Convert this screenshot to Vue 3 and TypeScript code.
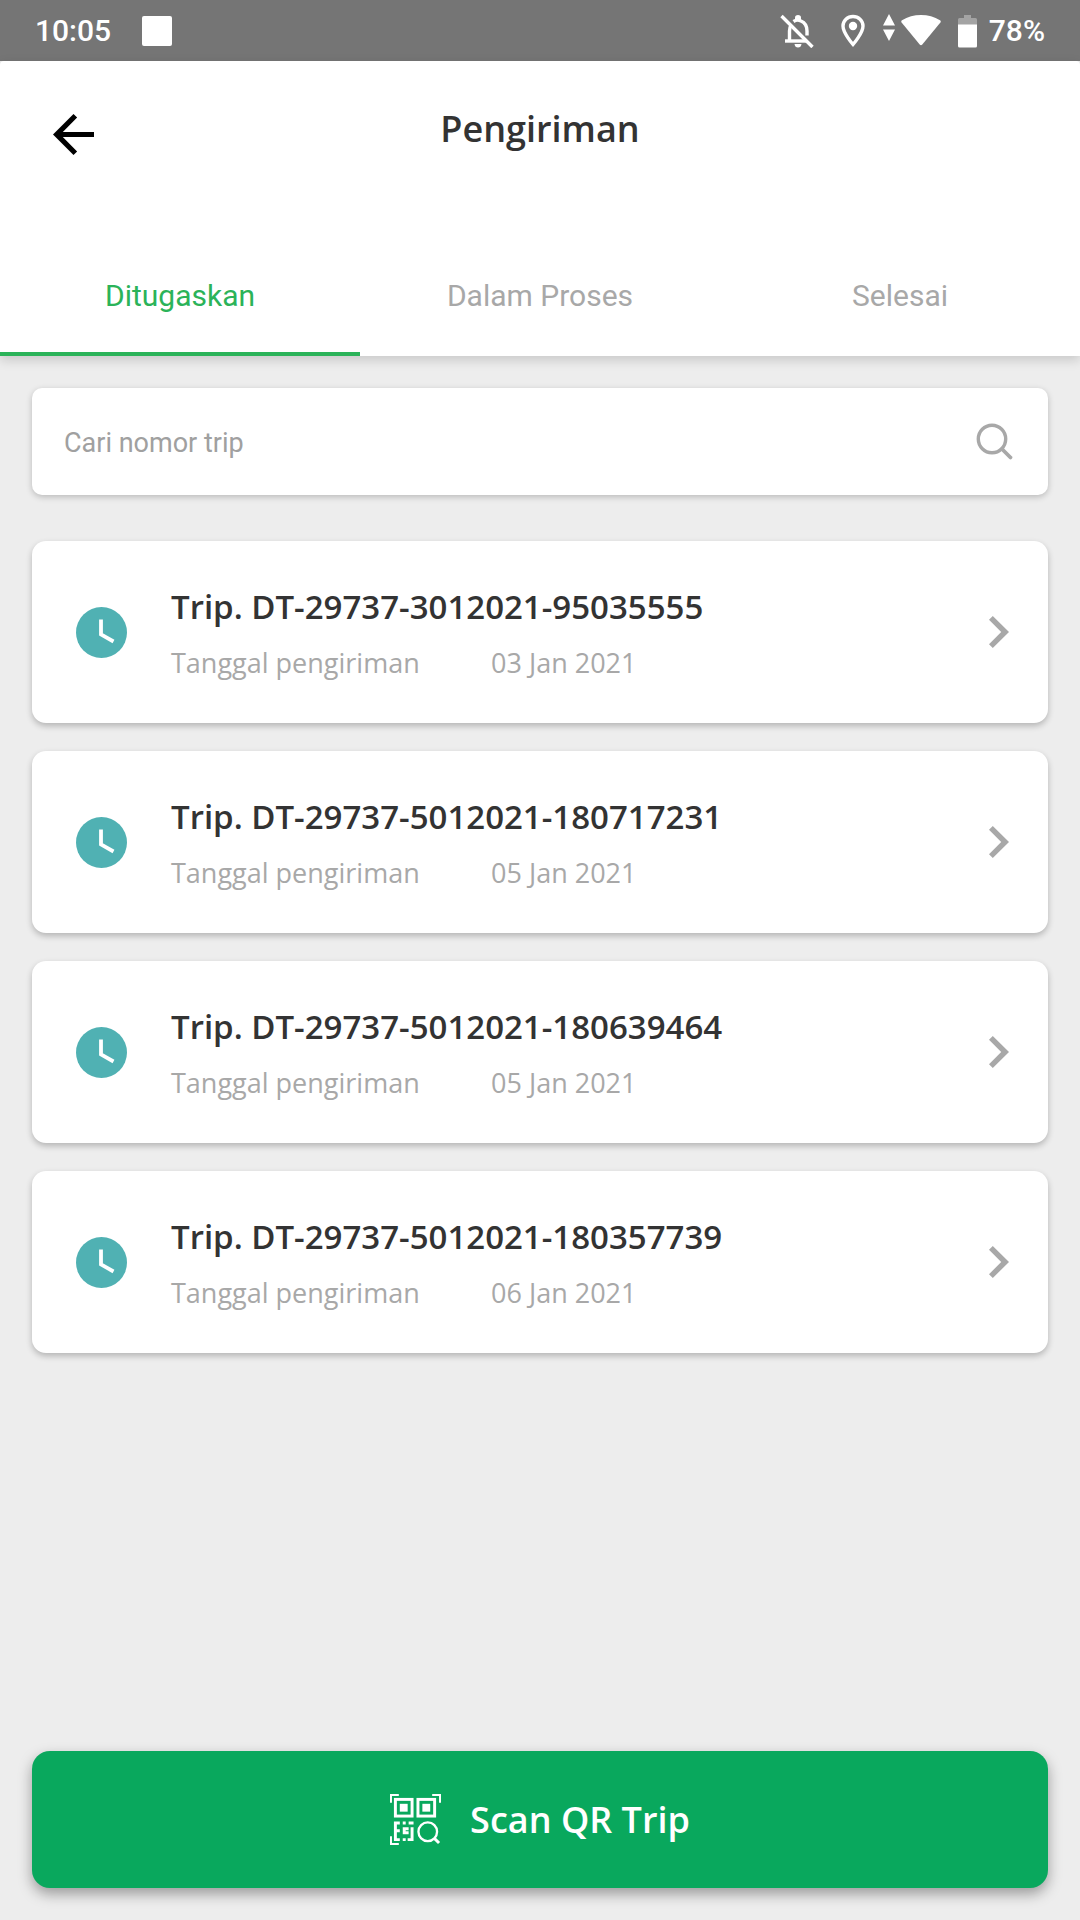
<script setup lang="ts">
import { ref } from 'vue'

interface Trip {
  code: string
  date: string
}

const tabs: string[] = ['Ditugaskan', 'Dalam Proses', 'Selesai']
const activeTab = ref(0)
const query = ref('')

const trips: Trip[] = [
  { code: 'DT-29737-3012021-95035555', date: '03 Jan 2021' },
  { code: 'DT-29737-5012021-180717231', date: '05 Jan 2021' },
  { code: 'DT-29737-5012021-180639464', date: '05 Jan 2021' },
  { code: 'DT-29737-5012021-180357739', date: '06 Jan 2021' },
]
</script>

<template>
  <div class="screen">
    <div class="status">
      <span class="status-text">10:05</span>
      <span class="status-square"></span>
      <div class="status-icons">
        <svg class="bell" width="34" height="34" viewBox="0 0 34 34" fill="none" stroke="#fff" stroke-width="3.400">
          <path d="M1.500 2L32.500 33" />
          <path d="M5 27H26" />
          <path d="M9.500 27V17Q9.500 13.500 11 11" />
          <path d="M13.500 7.500Q17 5 21 7Q27 9.500 27 17V21.500" />
          <path d="M15 6V3.500Q15 1 18 1Q21 1 21 3.500V6Z" fill="#fff" stroke="none" />
          <path d="M14.500 30H21.500Q21 33.500 18 33.500Q15 33.500 14.500 30Z" fill="#fff" stroke="none" />
        </svg>
        <svg class="pin" width="24" height="34" viewBox="0 0 24 34">
          <path d="M12 2.500C6.500 2.500 2 6.500 2 12C2 19 12 30.500 12 30.500S22 19 22 12C22 6.500 17.500 2.500 12 2.500Z" fill="none" stroke="#fff" stroke-width="3.400" />
          <circle cx="12" cy="12" r="4.200" fill="#fff" />
        </svg>
        <svg class="data" width="12" height="34" viewBox="0 0 12 34" fill="#fff">
          <path d="M6 0L12 11.500H0ZM0 15.500H12L6 27Z" />
        </svg>
        <svg class="wifi" width="40" height="34" viewBox="0 0 40 34" fill="#fff">
          <path d="M.6 8.500Q-.3 7.200 1 6.300Q9.500 1 20 1T39 6.300Q40.300 7.200 39.400 8.500L21.300 30.500Q20 32 18.700 30.500Z" />
        </svg>
        <svg class="battery" width="19" height="34" viewBox="0 0 19 34">
          <path d="M6 1H13V4H17.500Q19 4 19 5.500V12H0V5.500Q0 4 1.500 4H6Z" fill="#a3a3a3" />
          <path d="M0 10.500H19V32Q19 33.500 17.500 33.500H1.500Q0 33.500 0 32Z" fill="#fff" />
        </svg>
        <span class="status-text">78%</span>
      </div>
    </div>

    <header class="header">
      <div class="title-row">
        <button class="back" type="button" aria-label="Kembali">
          <svg width="41" height="41" viewBox="4 4 16 16">
            <path d="M20 11H7.830l5.590-5.590L12 4l-8 8 8 8 1.410-1.410L7.830 13H20v-2z" />
          </svg>
        </button>
        <h1 class="title">Pengiriman</h1>
      </div>
      <nav class="tabs">
        <button
          v-for="(tab, i) in tabs"
          :key="tab"
          type="button"
          class="tab"
          :class="{ active: i === activeTab }"
          @click="activeTab = i"
        >
          {{ tab }}
        </button>
      </nav>
    </header>

    <main class="content">
      <label class="search">
        <input v-model="query" type="text" placeholder="Cari nomor trip" aria-label="Cari nomor trip" />
        <svg width="38" height="38" viewBox="0 0 38 38" fill="none" stroke="#a8a8a8" stroke-linecap="round">
          <circle cx="16" cy="16" r="13.700" stroke-width="3.400" />
          <path d="M26 26L34.500 34.500" stroke-width="3.800" />
        </svg>
      </label>

      <ul class="trips">
        <li v-for="trip in trips" :key="trip.code">
          <button class="trip" type="button">
            <svg class="clock" width="51" height="51" viewBox="0 0 51 51">
              <circle cx="25.500" cy="25.500" r="25.500" fill="#50b1b3" />
              <path d="M25 12.500V27.500L37.500 34.500" fill="none" stroke="#fff" stroke-width="3.800" />
            </svg>
            <span class="trip-text">
              <span class="trip-code">Trip. {{ trip.code }}</span>
              <span class="trip-meta">
                <span class="trip-label">Tanggal pengiriman</span>
                <span>{{ trip.date }}</span>
              </span>
            </span>
            <svg class="chevron" width="20" height="34" viewBox="0 0 20 34">
              <path d="M3.800 1L20 17L3.800 33L0 29.200L12.200 17L0 4.800Z" fill="#a8a8a8" />
            </svg>
          </button>
        </li>
      </ul>

      <button class="scan" type="button">
        <svg width="51" height="51" viewBox="0 0 52 52" fill="none" stroke="#fff">
          <g stroke-width="2">
            <path d="M1 9V1H9M43 1H51V9M1 43V51H9" />
          </g>
          <g stroke-width="3">
            <rect x="5.500" y="5.500" width="17" height="17" />
            <rect x="28.500" y="5.500" width="17" height="17" />
            <circle cx="38.500" cy="38.500" r="9.500" stroke-width="2.400" />
            <path d="M45 45L50 50" />
          </g>
          <g fill="#fff" stroke="none">
            <rect x="10" y="10" width="8" height="8" />
            <rect x="33" y="10" width="8" height="8" />
            <path d="M4 28H10V31H7V36H10V39H7V45H10V48H4ZM13 28H16V31H13ZM19 28H24V31H19ZM13 34H19V37H16V38H19V41H13ZM21 34H24V48H18V45H21ZM13 45H16V48H13Z" />
          </g>
        </svg>
        <span>Scan QR Trip</span>
      </button>
    </main>
  </div>
</template>

<style>
body {
  margin: 0;
  background: #ededed;
}
</style>

<style scoped>
.screen {
  display: flex;
  flex-direction: column;
  min-height: 100vh;
  background: #ededed;
  font-family: 'Open Sans', 'Noto Sans', sans-serif;
  color: #333;
}

button {
  margin: 0;
  padding: 0;
  border: 0;
  background: none;
  font: inherit;
  color: inherit;
  cursor: pointer;
}

svg {
  display: block;
  flex: none;
}

.status {
  display: flex;
  align-items: center;
  box-sizing: border-box;
  height: 61px;
  padding: 0 35px;
  background: #757575;
}

.status-text {
  font: 500 30px/36px Roboto, sans-serif;
  color: #fff;
}

.status-square {
  width: 30px;
  height: 30px;
  margin-left: 31px;
  border-radius: 2px;
  background: #fff;
}

.status-icons {
  display: flex;
  align-items: center;
  margin-left: auto;
}

.pin {
  margin-left: 27px;
}

.data {
  margin-left: 18px;
}

.wifi {
  margin-left: 6px;
}

.battery {
  margin: 0 12px 0 17px;
}

.header {
  position: relative;
  background: #fff;
  border-radius: 4px 4px 0 0;
  box-shadow: 0 4px 12px rgba(0, 0, 0, 0.16);
}

.title-row {
  display: grid;
  grid-template-columns: 42px 1fr 42px;
  align-items: center;
  height: 136px;
  padding: 0 53px;
}

.back {
  margin-top: 10px;
}

.title {
  margin: 0;
  font-size: 36px;
  line-height: 48px;
  font-weight: 600;
  text-align: center;
}

.tabs {
  display: grid;
  grid-template-columns: repeat(3, 1fr);
  margin-top: 39px;
}

.tab {
  height: 120px;
  padding-top: 4px;
  box-sizing: border-box;
  border-bottom: 4px solid transparent;
  font: 400 30px/36px Roboto, sans-serif;
  color: #a8a8a8;
}

.tab.active {
  border-bottom-color: #2bb359;
  color: #2bb359;
}

.content {
  display: flex;
  flex: 1;
  flex-direction: column;
  padding: 32px;
}

.search {
  display: flex;
  align-items: center;
  height: 107px;
  padding: 0 34px 0 32px;
  border-radius: 10px;
  background: #fff;
  box-shadow: 0 2px 6px rgba(0, 0, 0, 0.22);
}

.search input {
  flex: 1;
  min-width: 0;
  padding: 2px 0 0;
  border: 0;
  outline: 0;
  background: none;
  font: 400 27px/36px Roboto, sans-serif;
  color: #333;
}

.search input::placeholder {
  color: #a0a0a0;
  opacity: 1;
}

.trips {
  display: flex;
  flex-direction: column;
  gap: 28px;
  margin: 46px 0 32px;
  padding: 0;
  list-style: none;
}

.trip {
  display: flex;
  align-items: center;
  box-sizing: border-box;
  width: 100%;
  height: 182px;
  padding: 0 39px 0 44px;
  border-radius: 14px;
  background: #fff;
  box-shadow: 0 3px 6px rgba(0, 0, 0, 0.24);
  text-align: left;
}

.trip-text {
  display: flex;
  flex: 1;
  flex-direction: column;
  gap: 12px;
  margin-left: 44px;
  padding-top: 6px;
}

.trip-code {
  font-size: 33px;
  line-height: 44px;
  font-weight: 600;
}

.trip-meta {
  display: flex;
  font-size: 27px;
  line-height: 44px;
  color: #a8a8a8;
}

.trip-label {
  width: 320px;
}

.scan {
  display: flex;
  align-items: center;
  justify-content: center;
  gap: 29px;
  height: 137px;
  margin-top: auto;
  border-radius: 18px;
  background: #09a85d;
  box-shadow: 0 6px 14px rgba(0, 0, 0, 0.35);
  font-size: 36px;
  line-height: 48px;
  font-weight: 600;
  color: #fff;
}
</style>
